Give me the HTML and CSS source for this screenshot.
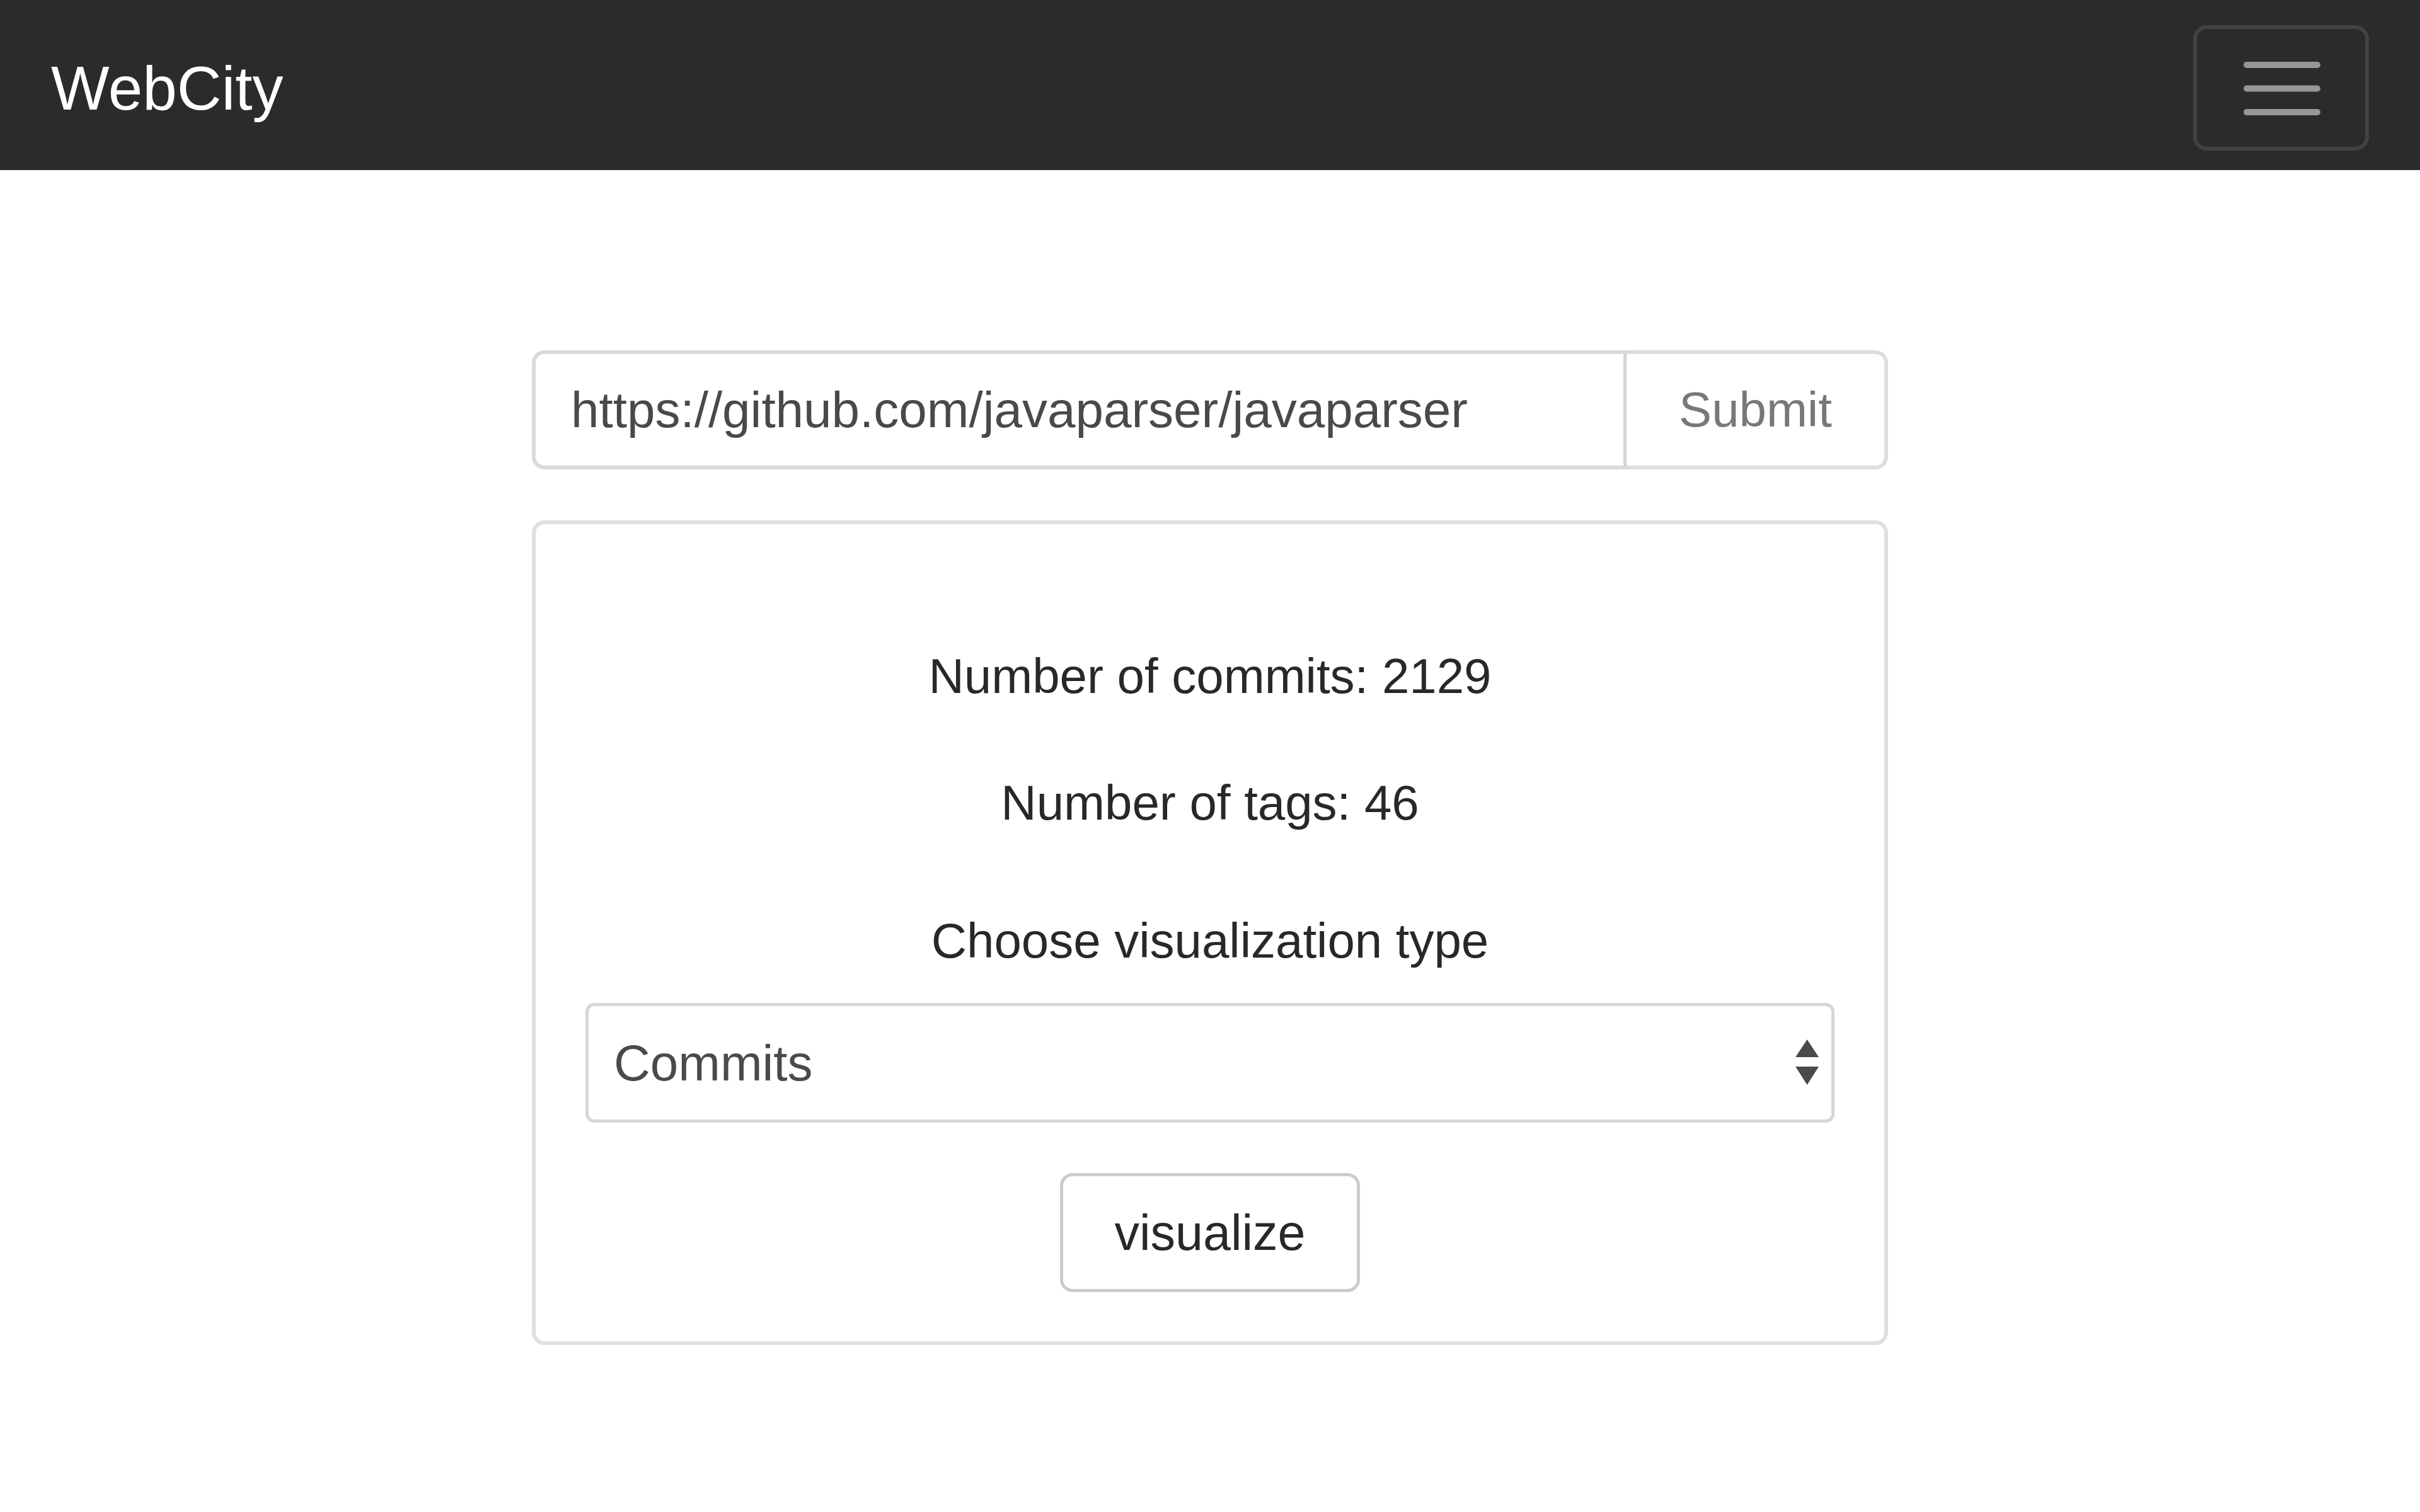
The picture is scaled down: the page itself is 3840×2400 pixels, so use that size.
FILE: index.html
```html
<!DOCTYPE html>
<html lang="en">
<head>
<meta charset="utf-8">
<title>WebCity</title>
<link rel="stylesheet" href="styles.css">
</head>
<body>
<nav class="navbar">
  <a class="brand" href="#">WebCity</a>
  <button class="toggler" type="button" aria-label="Toggle navigation">
    <svg class="toggler-icon" width="122" height="85" viewBox="0 0 122 85">
      <g stroke="#959698" stroke-width="10" stroke-linecap="round">
        <line x1="5" y1="5" x2="117" y2="5"/>
        <line x1="5" y1="42.5" x2="117" y2="42.5"/>
        <line x1="5" y1="80" x2="117" y2="80"/>
      </g>
    </svg>
  </button>
</nav>
<main class="main">
  <form class="input-group">
    <input class="url-input" type="text" value="https://github.com/javaparser/javaparser">
    <button class="submit-btn" type="button">Submit</button>
  </form>
  <section class="card">
    <p class="stat stat-commits">Number of commits: 2129</p>
    <p class="stat stat-tags">Number of tags: 46</p>
    <label class="choose-label" for="vis">Choose visualization type</label>
    <div class="select-wrap">
      <select id="vis" class="vis-select">
        <option>Commits</option>
        <option>Tags</option>
      </select>
      <svg class="select-arrows" width="37" height="72" viewBox="0 0 37 72">
        <polygon points="18.5,0 37,28 0,28" fill="#484b4e"/>
        <polygon points="0,43 37,43 18.5,72" fill="#484b4e"/>
      </svg>
    </div>
    <button class="vis-btn" type="button">visualize</button>
  </section>
</main>
</body>
</html>
```
FILE: styles.css
```css
html, body {
  margin: 0;
  padding: 0;
  background: #ffffff;
}
body {
  font-family: "Liberation Sans", Arial, Helvetica, sans-serif;
  color: #26282b;
}
.navbar {
  height: 270px;
  background: #2a2b2d;
  display: flex;
  justify-content: space-between;
  align-items: flex-start;
  padding: 0 81px 0 81px;
  box-sizing: border-box;
}
.brand {
  margin-top: 91px;
  font-size: 98px;
  line-height: 98px;
  color: #ffffff;
  text-decoration: none;
}
.toggler {
  margin-top: 40px;
  width: 279px;
  height: 199px;
  box-sizing: border-box;
  border: 6px solid #414244;
  border-radius: 22px;
  background: transparent;
  display: flex;
  align-items: center;
  justify-content: center;
  padding: 0;
}
.toggler-icon {
  display: block;
  margin-top: 2px;
  margin-left: 3px;
}
.main {
  width: 2152px;
  margin: 286px auto 0 auto;
}
.input-group {
  display: flex;
  height: 189px;
  margin: 0;
}
.url-input {
  flex: 1;
  min-width: 0;
  box-sizing: border-box;
  height: 189px;
  border: 6px solid #dadada;
  border-right: 5px solid #d4d4d4;
  border-radius: 20px 0 0 20px;
  padding: 0 40px 0 56px;
  font-family: "Liberation Sans", Arial, Helvetica, sans-serif;
  font-size: 80px;
  color: #474a4d;
  background: #ffffff;
  outline: none;
}
.submit-btn {
  width: 415px;
  box-sizing: border-box;
  height: 189px;
  border: 6px solid #dddddd;
  border-left: 0;
  border-radius: 0 20px 20px 0;
  background: #ffffff;
  font-family: "Liberation Sans", Arial, Helvetica, sans-serif;
  font-size: 78px;
  color: #777878;
  padding: 0;
}
.card {
  margin-top: 81px;
  border: 6px solid #dfdfdf;
  border-radius: 20px;
  padding: 183px 79px 78px 79px;
  display: flex;
  flex-direction: column;
  align-items: center;
}
.stat,
.choose-label {
  margin: 0;
  font-size: 78px;
  line-height: 117px;
  text-align: center;
  color: #26282b;
}
.stat-commits {
  margin-bottom: 84px;
}
.stat-tags {
  margin-bottom: 102px;
}
.choose-label {
  display: block;
  margin-bottom: 40px;
}
.select-wrap {
  position: relative;
  align-self: stretch;
}
.vis-select {
  display: block;
  width: 100%;
  height: 190px;
  box-sizing: border-box;
  border: 5px solid #d6d6d6;
  border-radius: 14px;
  background: #ffffff;
  -webkit-appearance: none;
  appearance: none;
  padding: 0 100px 0 40px;
  font-family: "Liberation Sans", Arial, Helvetica, sans-serif;
  font-size: 80px;
  color: #484b4e;
  outline: none;
}
.select-arrows {
  position: absolute;
  right: 25px;
  top: 58px;
  pointer-events: none;
}
.vis-btn {
  margin-top: 80px;
  width: 476px;
  height: 189px;
  box-sizing: border-box;
  border: 5px solid #cccccc;
  border-radius: 20px;
  background: #ffffff;
  font-family: "Liberation Sans", Arial, Helvetica, sans-serif;
  font-size: 79px;
  color: #26282b;
  padding: 0;
}
```
